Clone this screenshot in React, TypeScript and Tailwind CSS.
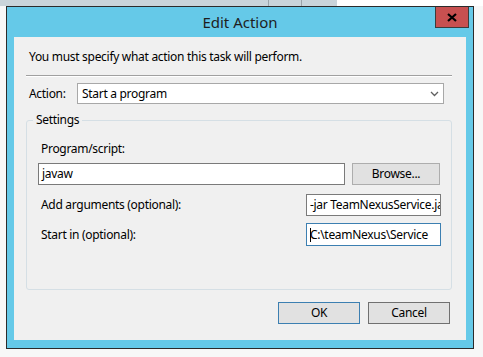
export default function App() {
  const font = { fontFamily: '"Noto Sans", "Liberation Sans", sans-serif' };

  return (
    <div className="w-[483px] h-[357px] bg-[#f7f7f7] flex flex-col overflow-hidden" style={font}>
      {/* background window behind the dialog */}
      <div className="h-[6px] flex">
        <div className="w-[268px] bg-[#c9d4da]" />
        <div className="w-[33px] bg-[#c9d4da] border-l border-[#9aa4aa]" />
        <div className="w-[36px] bg-[#c9d4da] border-l border-[#9aa4aa]" />
        <div className="flex-1 bg-white" />
      </div>
      <div className="flex pl-[6px]">
        {/* dialog window */}
        <div className="w-[468px] h-[343px] border border-[#2b2b2b] bg-[#65c9e8] flex flex-col">
          <div className="relative h-[30px] flex items-center justify-center">
            <span className="text-[15px] text-[#1e1e1e] leading-none mt-[1px]">Edit Action</span>
            <div className="absolute right-[4px] top-0 w-[34px] h-[21px] bg-[#c75050] border border-[#3c3c3c] border-t-0 flex items-center justify-center">
              <svg width="10" height="9" viewBox="0 0 10 9">
                <path d="M1 1 L9 8 M9 1 L1 8" stroke="#000" strokeWidth="2.2" />
              </svg>
            </div>
          </div>

          {/* client area */}
          <div className="mx-[7px] h-[303px] bg-[#f0f0f0] flex flex-col text-[12px] tracking-[-0.3px] text-black">
            <div className="pl-[15px] pt-[12px] h-[38px] leading-[16px]">
              You must specify what action this task will perform.
            </div>
            <div className="ml-[12px] mr-[14px] h-[2px] border-t border-[#a0a0a0] border-b border-b-white" />

            <div className="flex items-center mt-[6px] h-[21px]">
              <span className="pl-[15px] w-[63px]">Action:</span>
              <div className="w-[367px] h-[21px] bg-white border border-[#a8a8a8] flex items-center justify-between pl-[4px] pr-[4px]">
                <span>Start a program</span>
                <svg width="9" height="6" viewBox="0 0 9 6">
                  <path d="M1 1 L4.5 4.5 L8 1" stroke="#606060" strokeWidth="1.3" fill="none" />
                </svg>
              </div>
            </div>

            {/* Settings group */}
            <div className="relative ml-[12px] mt-[16px] w-[426px] h-[170px] border border-[#d5dfe5] rounded-[3px] flex flex-col">
              <span className="absolute -top-[10px] left-[6px] px-[3px] bg-[#f0f0f0] leading-[18px]">Settings</span>
              <div className="pl-[14px] pt-[19px] leading-[18px]">Program/script:</div>
              <div className="flex mt-[5px] ml-[11px] gap-[7px]">
                <div className="w-[307px] h-[22px] bg-white border border-[#7a7a7a] flex items-center pl-[3px]">
                  javaw
                </div>
                <div className="w-[88px] h-[22px] bg-[#e1e1e1] border border-[#adadad] flex items-center justify-center">
                  Browse...
                </div>
              </div>
              <div className="flex items-center mt-[9px] h-[22px]">
                <span className="pl-[14px] w-[279px]">Add arguments (optional):</span>
                <div className="w-[135px] h-[22px] bg-white border border-[#7a7a7a] flex items-center pl-[3px] overflow-hidden whitespace-nowrap">
                  -jar TeamNexusService.jar
                </div>
              </div>
              <div className="flex items-center mt-[7px] h-[23px]">
                <span className="pl-[14px] w-[279px]">Start in (optional):</span>
                <div className="w-[135px] h-[23px] bg-white border border-[#3c7fb1] flex items-center pl-[3px] overflow-hidden whitespace-nowrap">
                  <span className="w-px h-[14px] bg-black -mr-[1px]" />
                  C:\teamNexus\Service
                </div>
              </div>
            </div>

            <div className="flex justify-end gap-[8px] mr-[16px] mt-[12px]">
              <div className="w-[82px] h-[22px] bg-[#e1e1e1] border border-[#3c7fb1] flex items-center justify-center">OK</div>
              <div className="w-[82px] h-[22px] bg-[#e1e1e1] border border-[#707070] flex items-center justify-center">Cancel</div>
            </div>
          </div>
        </div>
      </div>
    </div>
  );
}
